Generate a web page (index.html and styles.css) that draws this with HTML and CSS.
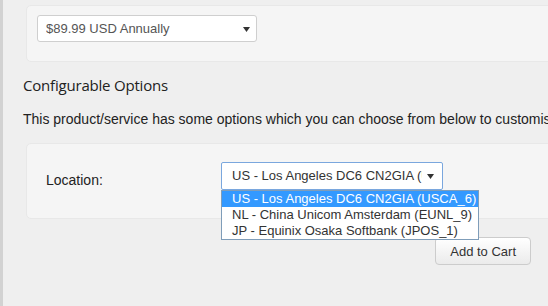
FILE: index.html
```html
<!DOCTYPE html>
<html>
<head>
    <meta charset="utf-8">
    <title>Configure Product</title>
    <link rel="stylesheet" href="styles.css">
</head>
<body>
    <div class="page">
        <div class="panel billing">
            <div class="select cycle">
                <span class="select-text">$89.99 USD Annually</span>
                <svg class="caret" width="7" height="5" viewBox="0 0 7 5"><path d="M0 0h7L3.5 5z" fill="#333"/></svg>
            </div>
        </div>

        <h3 class="section-title">Configurable Options</h3>
        <p class="section-intro">This product/service has some options which you can choose from below to customise your order.</p>

        <div class="panel options">
            <div class="option-row">
                <label class="option-label">Location:</label>
                <div class="select-wrap">
                    <div class="select location focused">
                        <span class="select-text">US - Los Angeles DC6 CN2GIA (USCA_6)</span>
                        <svg class="caret" width="7" height="5" viewBox="0 0 7 5"><path d="M0 0h7L3.5 5z" fill="#333"/></svg>
                    </div>
                    <ul class="dropdown">
                        <li class="selected">US - Los Angeles DC6 CN2GIA (USCA_6)</li>
                        <li>NL - China Unicom Amsterdam (EUNL_9)</li>
                        <li>JP - Equinix Osaka Softbank (JPOS_1)</li>
                    </ul>
                </div>
            </div>
        </div>

        <div class="actions">
            <button type="button" class="btn-cart">Add to Cart</button>
        </div>
    </div>
</body>
</html>
```

FILE: styles.css
```css
html, body {
    margin: 0;
    padding: 0;
    height: 100%;
    overflow: hidden;
}

body {
    font-family: "Liberation Sans", Arial, sans-serif;
    font-size: 14px;
    color: #333;
    background-color: #efefef;
    border-left: 3px solid #d2d2d2;
}

.page {
    padding: 5px 0 0 20px;
    width: 600px;
}

.panel {
    background: #f5f5f5;
    border: 1px solid #e8e8e8;
    border-radius: 5px;
    margin-left: 3px;
}

.billing {
    padding: 9px 0 19px 10px;
}

.select {
    position: relative;
    box-sizing: border-box;
    height: 27px;
    background: #fff;
    border: 1px solid #cfcfcf;
    border-radius: 3px;
    color: #555;
    font-size: 13px;
    line-height: 25px;
    padding: 0 26px 0 8px;
    white-space: nowrap;
}

.select-text {
    display: block;
    overflow: hidden;
}

.caret {
    position: absolute;
    right: 6px;
    top: 11px;
}

.cycle {
    width: 220px;
}

.section-title {
    font-family: "Open Sans", sans-serif;
    font-weight: 400;
    font-size: 15px;
    letter-spacing: -0.2px;
    margin: 13px 0 0 0;
    line-height: 20px;
    color: #222;
}

.section-intro {
    margin: 15px 0 0 0;
    line-height: 18px;
    white-space: nowrap;
    color: #222;
}

.options {
    margin-top: 15px;
    height: 74px;
}

.option-row {
    display: flex;
    align-items: flex-start;
    padding: 18px 0 0 19px;
}

.option-label {
    width: 175px;
    padding-top: 10px;
    color: #222;
}

.select-wrap {
    position: relative;
}

.location {
    width: 222px;
    height: 28px;
    line-height: 26px;
    color: #333;
    padding-right: 20px;
    padding-left: 10px;
}

.location .caret {
    right: 8px;
}

.focused {
    border-color: #7aa7de;
    border-radius: 2px;
}

.dropdown {
    position: absolute;
    left: 0;
    top: 28px;
    margin: 0;
    padding: 0;
    list-style: none;
    background: #fff;
    border: 1px solid #7f9db9;
    z-index: 2;
    white-space: nowrap;
}

.dropdown li {
    padding: 0 2px 0 10px;
    line-height: 16px;
    font-size: 13px;
    color: #333;
}

.dropdown li.selected {
    background: #3399ff;
    color: #fff;
}

.actions {
    display: flex;
    justify-content: flex-end;
    padding: 18px 17px 0 0;
    width: 508px;
}

.btn-cart {
    font-family: "Liberation Sans", Arial, sans-serif;
    font-size: 13px;
    color: #333;
    background: linear-gradient(#fff, #ebebeb);
    border: 1px solid #ccc;
    border-radius: 4px;
    height: 28px;
    padding: 0 14px;
    cursor: pointer;
}
```
